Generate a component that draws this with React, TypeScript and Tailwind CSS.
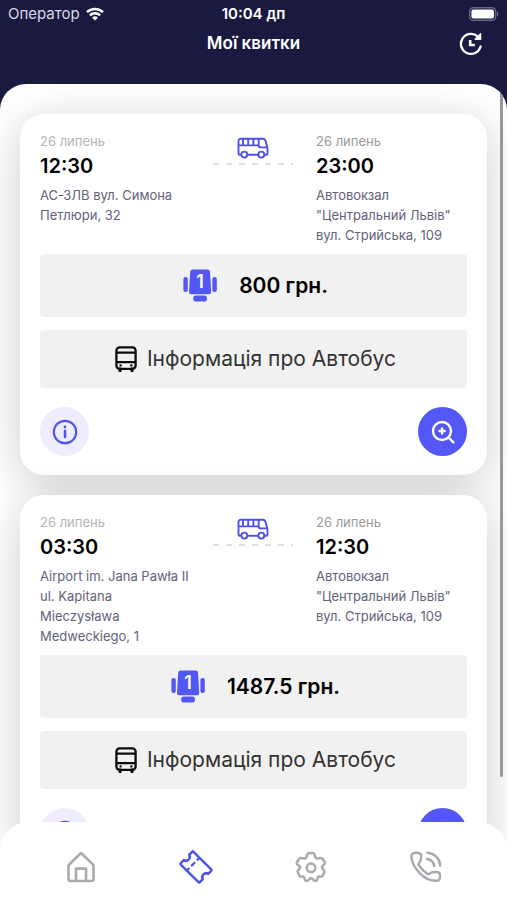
type Stop = {
  date: string;
  time: string;
  address: string;
};

type Ticket = {
  id: number;
  from: Stop;
  to: Stop;
  seat: number;
  price: string;
};

const tickets: Ticket[] = [
  {
    id: 1,
    from: { date: "26 липень", time: "12:30", address: "АС-ЗЛВ вул. Симона\nПетлюри, 32" },
    to: { date: "26 липень", time: "23:00", address: 'Автовокзал\n"Центральний Львів"\nвул. Стрийська, 109' },
    seat: 1,
    price: "800 грн.",
  },
  {
    id: 2,
    from: { date: "26 липень", time: "03:30", address: "Airport im. Jana Pawła II\nul. Kapitana\nMieczysława\nMedweckiego, 1" },
    to: { date: "26 липень", time: "12:30", address: 'Автовокзал\n"Центральний Львів"\nвул. Стрийська, 109' },
    seat: 1,
    price: "1487.5 грн.",
  },
];

function WifiIcon() {
  return (
    <svg viewBox="0 0 18 14" className="h-3.5 w-[18px]" fill="none" stroke="currentColor" strokeWidth="2.5">
      <path d="M1 5.2a11.4 11.4 0 0 1 16 0" />
      <path d="M3.9 8.3a7.2 7.2 0 0 1 10.2 0" />
      <path d="M9 13.6 6.1 10.7a4.1 4.1 0 0 1 5.8 0z" fill="currentColor" stroke="none" />
    </svg>
  );
}

function BatteryIcon() {
  return (
    <svg viewBox="0 0 30 14" className="h-3.5 w-[30px]">
      <rect x="0.7" y="0.7" width="26" height="12.6" rx="3.6" fill="none" stroke="#66668c" strokeWidth="1.4" />
      <rect x="2.4" y="2.4" width="22.6" height="9.2" rx="2" fill="white" />
      <path d="M28 4.8c1.9.6 1.9 3.8 0 4.4z" fill="#77779a" />
    </svg>
  );
}

function HistoryIcon() {
  return (
    <svg viewBox="0 0 24 24" className="size-6" fill="none" stroke="currentColor" strokeWidth="2.3" strokeLinecap="round" strokeLinejoin="round">
      <path d="M21.6 14.5A10 10 0 1 1 18.8 4.6" />
      <path d="M21.6 1.8v5.4h-5.4z" fill="currentColor" strokeWidth="1.4" />
      <path d="M11.2 8v5h4.6" strokeWidth="2.6" strokeLinecap="butt" strokeLinejoin="miter" />
    </svg>
  );
}

function CoachIcon() {
  return (
    <svg viewBox="0 0 32 22" className="h-[22px] w-8" fill="none" stroke="#5050ec" strokeWidth="1.9" strokeLinejoin="round">
      <path d="M4.2 17.8H3.4a1.9 1.9 0 0 1-1.9-1.9V4a2.2 2.2 0 0 1 2.2-2.2h22a3 3 0 0 1 2.9 2.2l1.6 6.2c.2.8.3 1.6.3 2.4v3.3a1.9 1.9 0 0 1-1.9 1.9h-1" />
      <path d="M10.4 17.8h10.8" />
      <circle cx="7.3" cy="17.6" r="3" />
      <circle cx="24.3" cy="17.6" r="3" />
      <path d="M1.5 8.4h20.2M6 1.8v6.6M11.2 1.8v6.6M16.4 1.8v6.6M21.7 1.8v6.6c0 1.3.8 2 2 2h6.6" />
    </svg>
  );
}

function SeatIcon({ seat }: { seat: number }) {
  return (
    <svg viewBox="0 0 34 34" className="size-[34px]" fill="#5257f5">
      <rect x="0.4" y="8" width="4.4" height="15" rx="2" />
      <rect x="29.4" y="8" width="4.4" height="15" rx="2" />
      <path d="M9.6.6h15A2.4 2.4 0 0 1 27 2.8l1.2 20a2.2 2.2 0 0 1-2.2 2.4H8.2A2.2 2.2 0 0 1 6 22.8l1.2-20A2.4 2.4 0 0 1 9.6.6z" />
      <rect x="10.2" y="26.6" width="13.8" height="6" rx="2.8" />
      <text x="17" y="19" textAnchor="middle" fontSize="18" fontWeight="600" fill="white">
        {seat}
      </text>
    </svg>
  );
}

function BusIcon() {
  return (
    <svg viewBox="0 0 22 26" className="h-[26px] w-[22px]" fill="none" stroke="#0c0c0c" strokeWidth="2.3">
      <rect x="1.4" y="1.4" width="19.2" height="21.4" rx="3.2" />
      <path d="M1.4 6.6h19.2M1.4 16.2h19.2" />
      <path d="M5 22.8V25M17 22.8V25" strokeWidth="3" strokeLinecap="round" />
      <circle cx="5.6" cy="19.4" r="1.2" fill="#0c0c0c" stroke="none" />
      <circle cx="16.4" cy="19.4" r="1.2" fill="#0c0c0c" stroke="none" />
    </svg>
  );
}

function InfoIcon() {
  return (
    <svg viewBox="0 0 26 26" className="size-[26px]" fill="none" stroke="#5055e8" strokeWidth="2.2" strokeLinecap="round">
      <circle cx="13" cy="13" r="11.2" />
      <path d="M13 11.8v6.2" strokeWidth="2.5" />
      <circle cx="13" cy="8" r="1.4" fill="#5055e8" stroke="none" />
    </svg>
  );
}

function ZoomInIcon() {
  return (
    <svg viewBox="0 0 24 24" className="size-6" fill="none" stroke="white" strokeWidth="2.4" strokeLinecap="round">
      <circle cx="11" cy="11" r="9" />
      <path d="m17.6 17.6 4.8 4.8M11 8.4v5.2M8.4 11h5.2" />
    </svg>
  );
}

function HomeIcon() {
  return (
    <svg viewBox="0 0 32 32" className="size-8" fill="none" stroke="currentColor" strokeWidth="2.6" strokeLinejoin="round">
      <path d="M16 2 4.4 13.2c-.6.6-.9 1.2-.9 2V28a2 2 0 0 0 2 2h21a2 2 0 0 0 2-2V15.2c0-.8-.3-1.4-.9-2z" />
      <path d="M11 30V17.6h10V30" />
    </svg>
  );
}

function TicketIcon() {
  return (
    <svg viewBox="0 0 36 36" className="size-9" fill="none" stroke="currentColor" strokeWidth="2.5" strokeLinejoin="round">
      <g transform="rotate(45 18 18)">
        <path d="M5.5 9h25a1 1 0 0 1 1 1v4.2a3.9 3.9 0 0 0 0 7.6V26a1 1 0 0 1-1 1h-25a1 1 0 0 1-1-1v-4.200a3.9 3.9 0 0 0 0-7.6V10a1 1 0 0 1 1-1z" />
        <path d="M14 9v3.6M14 15.2v5.6M14 23.4V27" strokeWidth="2.2" />
      </g>
    </svg>
  );
}

function SettingsIcon() {
  return (
    <svg viewBox="0 0 32 32" className="size-8" fill="none" stroke="currentColor" strokeWidth="2.5" strokeLinejoin="round">
      <path d="M12.3 3.5Q12.6 2 14 2h4q1.4 0 1.7 1.5l.5 2.4q.5 2 2.4 1.7l3-.6q1.4-.2 2.1 1l1.9 3.2q.7 1.3-.3 2.2l-1.7 1.5q-1.3 1.3 0 2.6l1.3 1.8q.7 1 .3 2l-1.5 3.3q-.6 1.3-2 1.2l-1.5-.2q-1.8 0-1.7 1.7 0 2-1.6 2.4-1.4.4-2.300-.6l-.9-1.1q-1.700-1.600-3.400 0l-.9 1.1q-.9 1-2.300.6-1.600-.4-1.600-2.400.1-1.700-1.700-1.700l-1.500.2q-1.400.1-2-1.2l-1.500-3.300q-.4-1 .3-2l1.300-1.800q1.300-1.300 0-2.600L2.400 13.400q-1-.9-.3-2.200L4 8q.7-1.200 2.100-1l3 .6q1.900.3 2.400-1.700z" />
      <circle cx="16" cy="16.8" r="4.3" />
    </svg>
  );
}

function PhoneIcon() {
  return (
    <svg viewBox="0 0 32 32" className="size-8" fill="none" stroke="currentColor" strokeWidth="2.5" strokeLinecap="round" strokeLinejoin="round">
      <path d="M3.2 2.3q4.200-1.400 7 .3 1.300.8 1 2.700l-.7 4.200q-.2 1-.9 1.700-1.600 1.700-.4 3.500 3 5 8 8 1.700.9 3.200-.6.800-.8 2-.9l4.300-.2q2.300-.1 3 2 .7 2.600-.2 5-.5 1.500-2.200 1.700-9.500.7-17.600-7.600Q1.400 13.400 1.400 5q0-2 1.800-2.700z" />
      <path d="M17.5 1.8A13.5 13.5 0 0 1 30.2 14.5M17 8a8.5 8.5 0 0 1 7.2 7" />
    </svg>
  );
}

function StopInfo({ stop, arrival = false }: { stop: Stop; arrival?: boolean }) {
  return (
    <div>
      <p className={arrival ? "text-[13px] leading-5 text-[#9a9a9a]" : "text-[13px] leading-5 text-[#b5b5b5]"}>
        {stop.date}
      </p>
      <p className="text-xl leading-[30px] font-semibold text-black">{stop.time}</p>
      <p className="mt-1 text-[13px] leading-5 whitespace-pre-line text-[#62627a]">{stop.address}</p>
    </div>
  );
}

function TicketCard({ ticket }: { ticket: Ticket }) {
  return (
    <article className="rounded-3xl bg-white px-5 pt-[17px] pb-[19px] shadow-[0_8px_44px_rgba(0,0,0,0.2)]">
      <div className="grid grid-cols-[150fr_80px_151fr] gap-x-[23px]">
        <StopInfo stop={ticket.from} />
        <div className="flex flex-col items-center pt-1.5">
          <CoachIcon />
          <svg className="mt-1 h-0.5 w-full" stroke="#e0e0e0" strokeWidth="2" strokeDasharray="6 7">
            <path d="M0 1h80" />
          </svg>
        </div>
        <StopInfo stop={ticket.to} arrival />
      </div>

      <div className="mt-[9px] flex h-[63px] items-center justify-center gap-[22px] rounded bg-[#f1f1f1] pl-1">
        <SeatIcon seat={ticket.seat} />
        <span className="text-[21px] font-semibold text-black">{ticket.price}</span>
      </div>

      <button className="mt-[13px] flex h-[58px] w-full items-center justify-center gap-2.5 rounded bg-[#f1f1f1] pl-1">
        <BusIcon />
        <span className="text-[21px] text-[#333333]">Інформація про Автобус</span>
      </button>

      <div className="mt-[19px] flex justify-between">
        <button aria-label="Деталі" className="flex size-[49px] items-center justify-center rounded-full bg-[#ededff]">
          <InfoIcon />
        </button>
        <button aria-label="Збільшити" className="flex size-[49px] items-center justify-center rounded-full bg-[#5257f5]">
          <ZoomInIcon />
        </button>
      </div>
    </article>
  );
}

export default function App() {
  return (
    <div className="flex h-dvh flex-col overflow-hidden bg-[#1a1a40] font-['Inter','Noto_Sans',sans-serif]">
      <header className="pb-6 text-white">
        <div className="grid h-7 grid-cols-[1fr_auto_1fr] items-center px-2 text-[15px]">
          <div className="flex items-center gap-1.5 text-[#d8d8e6]">
            Оператор
            <span className="text-white">
              <WifiIcon />
            </span>
          </div>
          <span className="font-semibold">10:04 дп</span>
          <div className="flex justify-end">
            <BatteryIcon />
          </div>
        </div>
        <div className="grid h-8 grid-cols-[1fr_auto_1fr] items-center px-6">
          <h1 className="col-start-2 text-[17px] font-semibold">Мої квитки</h1>
          <button aria-label="Історія" className="justify-self-end">
            <HistoryIcon />
          </button>
        </div>
      </header>

      <main className="relative min-h-0 flex-1 overflow-hidden rounded-t-[26px] bg-white">
        <div className="flex flex-col gap-5 px-5 pt-[30px]">
          {tickets.map((ticket) => (
            <TicketCard key={ticket.id} ticket={ticket} />
          ))}
        </div>
        {/* scroll indicator */}
        <div className="absolute top-1.5 right-1 bottom-[73px] w-[3px] rounded-full bg-[#999999]" />
      </main>

      <nav className="relative -mt-7 flex rounded-t-[28px] bg-white px-6 pt-[27px] pb-[15px] text-[#a9abb0]">
        <a href="#home" aria-label="Головна" className="flex h-9 flex-1 items-center justify-center">
          <HomeIcon />
        </a>
        <a href="#tickets" aria-label="Мої квитки" className="flex h-9 flex-1 items-center justify-center text-[#5055e8]">
          <TicketIcon />
        </a>
        <a href="#settings" aria-label="Налаштування" className="flex h-9 flex-1 items-center justify-center">
          <SettingsIcon />
        </a>
        <a href="#contacts" aria-label="Контакти" className="flex h-9 flex-1 items-center justify-center">
          <PhoneIcon />
        </a>
      </nav>
    </div>
  );
}
